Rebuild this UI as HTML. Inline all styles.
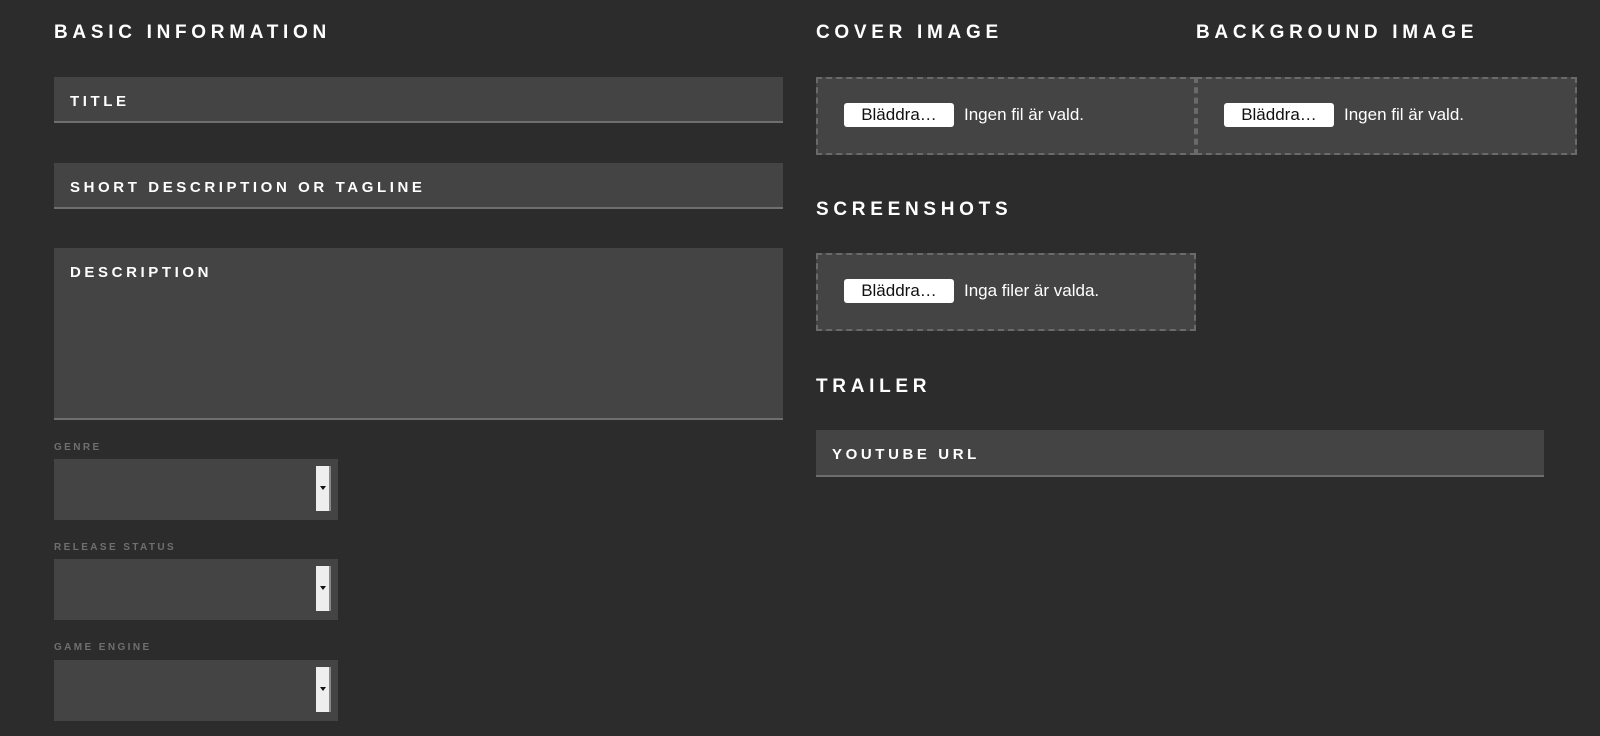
<!DOCTYPE html>
<html><head><meta charset="utf-8"><style>
body{margin:0;background:#2c2c2c;width:1600px;height:736px;overflow:hidden;font-family:"Liberation Sans",sans-serif;position:relative}
h2{position:absolute;margin:0;color:#fff;font-size:19px;font-weight:bold;letter-spacing:4.7px;line-height:20px}
.f{position:absolute;background:#444;border-bottom:2px solid #6e6e6e;box-sizing:border-box}
.f span{position:absolute;left:16px;top:16px;color:#fff;font-weight:bold;font-size:15px;letter-spacing:3.6px}
.lab{position:absolute;color:#6f6f6f;font-size:10px;font-weight:bold;letter-spacing:2.4px}
.sel{position:absolute;left:54px;width:284px;height:61px;background:#444}
.sel i{position:absolute;right:7px;top:7px;width:15px;height:45px;background:#eee;border-right:2px solid #888;box-sizing:border-box}
.sel i:after{content:"";position:absolute;left:4px;top:20px;border:3px solid transparent;border-top:4px solid #111}
.up{position:absolute;background:#444;border:2px dashed #6a6a6a;box-sizing:border-box}
.btn{position:absolute;left:26px;top:24px;width:110px;height:24px;background:#fff;border-radius:3px;font-size:17px;line-height:24px;text-align:center;color:#111}
.t{position:absolute;left:146px;top:26px;color:#fff;font-size:17px}
</style></head><body>
<h2 style="left:54px;top:23px">BASIC INFORMATION</h2>
<div class="f" style="left:54px;top:77px;width:729px;height:46px"><span>TITLE</span></div>
<div class="f" style="left:54px;top:163px;width:729px;height:46px"><span>SHORT DESCRIPTION OR TAGLINE</span></div>
<div class="f" style="left:54px;top:248px;width:729px;height:172px"><span>DESCRIPTION</span></div>
<div class="lab" style="left:54px;top:442px">GENRE</div>
<div class="sel" style="top:459px"><i></i></div>
<div class="lab" style="left:54px;top:542px">RELEASE STATUS</div>
<div class="sel" style="top:559px"><i></i></div>
<div class="lab" style="left:54px;top:642px">GAME ENGINE</div>
<div class="sel" style="top:660px"><i></i></div>
<h2 style="left:816px;top:23px">COVER IMAGE</h2>
<h2 style="left:1196px;top:23px">BACKGROUND IMAGE</h2>
<div class="up" style="left:816px;top:77px;width:380px;height:78px"><div class="btn">Bläddra…</div><div class="t">Ingen fil är vald.</div></div>
<div class="up" style="left:1196px;top:77px;width:381px;height:78px"><div class="btn">Bläddra…</div><div class="t">Ingen fil är vald.</div></div>
<h2 style="left:816px;top:200px">SCREENSHOTS</h2>
<div class="up" style="left:816px;top:253px;width:380px;height:78px"><div class="btn">Bläddra…</div><div class="t">Inga filer är valda.</div></div>
<h2 style="left:816px;top:377px">TRAILER</h2>
<div class="f" style="left:816px;top:430px;width:728px;height:47px"><span>YOUTUBE URL</span></div>
</body></html>
